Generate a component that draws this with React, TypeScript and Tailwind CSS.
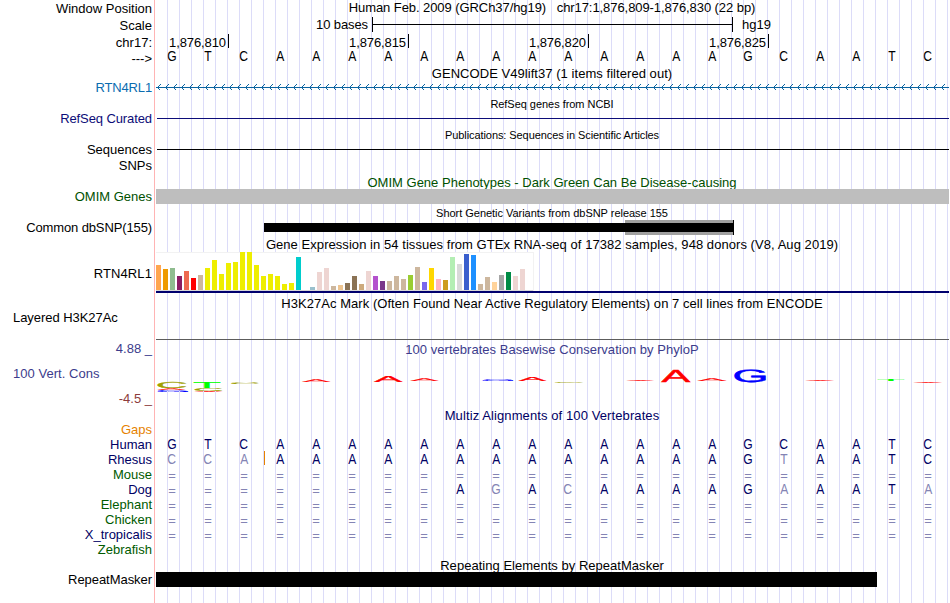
import type { ReactNode } from "react";

const GRID =
  "bg-[repeating-linear-gradient(90deg,transparent_0px,transparent_11px,#dcdcf8_11px,#dcdcf8_12px)]";

type RowProps = {
  h: string;
  label?: string;
  labelClass?: string;
  children?: ReactNode;
};

function Row({ h, label, labelClass = "", children }: RowProps) {
  return (
    <div className={`flex ${h}`}>
      <div className="w-[155px] shrink-0 border-r border-[#ffb4b4] pr-[2px] text-right">
        <div className={`whitespace-pre ${labelClass}`}>{label}</div>
      </div>
      <div className={`ml-px w-[793px] shrink-0 ${GRID}`}>{children}</div>
    </div>
  );
}

function Title({ className = "", children }: { className?: string; children: ReactNode }) {
  return <div className={`w-[792px] whitespace-pre text-center ${className}`}>{children}</div>;
}

function Bases({ seq, className = "", dim = [] }: { seq: string; className?: string; dim?: number[] }) {
  return (
    <div className={`flex h-[15px] w-[792px] ${className}`}>
      {seq.split("").map((c, i) => (
        <span key={i} className="flex w-[36px] justify-center pr-[4px]">
          <span
            className={`${c === "=" ? "mt-px" : "origin-[50%_12px] scale-x-[0.93] scale-y-[1.07]"} ${
              c === "=" || dim.includes(i) ? "text-[#8484b4]" : ""
            }`}
          >
            {c}
          </span>
        </span>
      ))}
    </div>
  );
}

const Y = "#eeee00";
const EXPRESSION: [number, string][] = [
  [25, "#ffa54f"], [21, "#ee9a00"], [22, "#8fbc8f"], [14, "#8b1c62"], [19, "#ee6a50"], [12, "#ff0000"], [15, "#cdb79e"],
  [22, Y], [30, Y], [16, Y], [27, Y], [28, Y], [38, Y], [38, Y], [25, Y], [14, Y], [16, Y], [14, Y], [6, Y], [7, Y],
  [33, "#00cdcd"], [0, "#ee82ee"], [3, "#9ac0cd"], [18, "#eed5d2"], [22, "#eed5d2"], [4, "#cdb79e"], [5, "#eec591"],
  [7, "#8b7355"], [14, "#8b7355"], [6, "#cdaa7d"], [19, "#eed5d2"], [14, "#b452cd"], [9, "#7a378b"], [9, "#cdb79e"],
  [14, "#cdb79e"], [11, "#cdb79e"], [15, "#9acd32"], [23, "#cdb79e"], [8, "#7a67ee"], [22, "#ffd700"], [11, "#ffb6c1"],
  [10, "#cd9b1d"], [33, "#b4eeb4"], [26, "#d9d9d9"], [36, "#3a5fcd"], [35, "#1e90ff"], [6, "#cdb79e"], [13, "#cdb79e"],
  [8, "#ffd39b"], [15, "#a6a6a6"], [18, "#008b45"], [14, "#eed5d2"], [21, "#eed5d2"], [0, "#ff00ff"],
];

// Ink box of each base letter at a font size of 1em: left, right, top, bottom.
const INK: Record<string, [number, number, number, number]> = {
  A: [0.004, 0.663, 0.688, 0],
  C: [0.05, 0.686, 0.698, 0.01],
  G: [0.05, 0.715, 0.698, 0.01],
  T: [0.021, 0.59, 0.688, 0],
};
const RED = "#ff0000";
const OLIVE = "#a0a000";
const BLUE = "#0000ff";
const GREEN = "#00ff00";

// letter, left, right, top, bottom, colour (page coordinates)
const LOGO: [string, number, number, number, number, string][] = [
  ["C", 158, 186, 382, 388.2, OLIVE],
  ["A", 158, 185, 388.2, 390, RED],
  ["G", 158, 188, 390, 392, BLUE],
  ["T", 194, 220, 382, 388, GREEN],
  ["C", 195, 222.3, 388, 391, OLIVE],
  ["A", 195, 222.3, 391, 392, RED],
  ["C", 231.7, 259, 382.2, 383.8, OLIVE],
  ["A", 302.5, 330, 379.2, 382, RED],
  ["A", 374.3, 402, 376, 382, RED],
  ["A", 410.7, 438, 378.2, 381, RED],
  ["G", 483, 513, 379, 380.8, BLUE],
  ["A", 519, 546, 377, 381, RED],
  ["C", 555, 583, 382, 383, OLIVE],
  ["A", 627, 654, 380, 381, RED],
  ["A", 661.7, 690, 370, 382, RED],
  ["A", 698, 726, 378.2, 381, RED],
  ["G", 734.7, 765.5, 369.2, 382, BLUE],
  ["A", 806, 834, 380, 381, RED],
  ["T", 878, 904, 379, 381, GREEN],
  ["A", 914, 942, 382, 383, RED],
];

function ConservationLogo() {
  return (
    <svg
      width="793"
      height="28"
      viewBox="156 366 793 28"
      className="block overflow-visible"
      textRendering="geometricPrecision"
    >
      {LOGO.map(([c, x0, x1, y0, y1, color], i) => {
        const [l, r, t, b] = INK[c];
        const sx = (x1 - x0) / ((r - l) * 20);
        const sy = (y1 - y0) / ((t + b) * 20);
        return (
          <text
            key={i}
            fontSize="20"
            fill={color}
            stroke={color}
            strokeWidth="0.5"
            transform={`translate(${x0 - l * 20 * sx} ${y1 - b * 20 * sy}) scale(${sx} ${sy})`}
          >
            {c}
          </text>
        );
      })}
    </svg>
  );
}

function StrandArrows() {
  const tips = Array.from({ length: 99 }, (_, i) => i * 8 + 1);
  return (
    <svg width="793" height="16" viewBox="0 0 793 16" className="block" fill="none" stroke="#0a64a0">
      <path d="M0 7.5H793" />
      <path
        d={tips.map((x) => `M${x + 3.5} 4.5L${x + 0.5} 7.5L${x + 3.5} 10.5`).join("")}
        shapeRendering="crispEdges"
      />
    </svg>
  );
}

function Positions() {
  return (
    <div className="flex tracking-[-0.1px]">
      <div className="flex h-[14px] w-[73px] justify-end border-r border-black pr-[2px]">
        <span className="mt-px">1,876,810</span>
      </div>
      {["1,876,815", "1,876,820", "1,876,825"].map((p) => (
        <div key={p} className="flex h-[14px] w-[180px] justify-end border-r border-black pr-[2px]">
          <span className="mt-px">{p}</span>
        </div>
      ))}
    </div>
  );
}

const HUMAN = "GTCAAAAAAAAAAAAAGCAATC";
const NONE = "======================";

export default function App() {
  return (
    <div className="h-[603px] w-[950px] overflow-hidden bg-white font-['Liberation_Sans',Arial,sans-serif] text-[13px] leading-[15px] text-black">
      <Row h="h-[17px]" label="Window Position" labelClass="mt-px">
        <Title className="tracking-[-0.07px]">
          {"Human Feb. 2009 (GRCh37/hg19)   chr17:1,876,809-1,876,830 (22 bp)"}
        </Title>
      </Row>
      <Row h="h-[17px]" label="Scale" labelClass="mt-px">
        <div className="flex">
          <span className="w-[212px] text-right tracking-[-0.1px]">10 bases</span>
          <div className="ml-[4px] flex h-[15px] w-[361px] items-center border-x border-black">
            <div className="h-px w-full bg-black" />
          </div>
          <span className="ml-[9px]">hg19</span>
        </div>
      </Row>
      <Row h="h-[15px]" label="chr17:" labelClass="mt-px">
        <Positions />
      </Row>
      <Row h="h-[17px]" label="--->" labelClass="mt-[2px]">
        <Bases seq={HUMAN} />
      </Row>
      <Row h="h-[14px]">
        <Title className="tracking-[0.05px]">GENCODE V49lift37 (1 items filtered out)</Title>
      </Row>
      <Row h="h-[16px]" label="RTN4RL1" labelClass="text-[#0a6cb0] tracking-[-0.15px]">
        <StrandArrows />
      </Row>
      <Row h="h-[15px]">
        <Title className="pt-[2px] text-[11px] leading-[12px] tracking-[-0.04px]">RefSeq genes from NCBI</Title>
      </Row>
      <Row h="h-[15px]" label="RefSeq Curated" labelClass="text-[#0c0c78] tracking-[-0.1px]">
        <div className="flex h-[8px] items-end pl-px">
          <div className="h-px w-full bg-[#0c0c78]" />
        </div>
      </Row>
      <Row h="h-[16px]">
        <Title className="pt-[3px] text-[11px] leading-[12px] tracking-[-0.08px]">
          Publications: Sequences in Scientific Articles
        </Title>
      </Row>
      <Row h="h-[16px]" label="Sequences">
        <div className="flex h-[8px] items-end pl-px">
          <div className="h-px w-full bg-black" />
        </div>
      </Row>
      <Row h="h-[17px]" label="SNPs" />
      <Row h="h-[14px]">
        <Title className="text-[#005000] tracking-[0.01px]">OMIM Gene Phenotypes - Dark Green Can Be Disease-causing</Title>
      </Row>
      <Row h="h-[15px]" label="OMIM Genes" labelClass="text-[#005000]">
        <div className="relative h-[15px] bg-[#bebebe]" />
      </Row>
      <Row h="h-[16px]">
        <Title className="pt-[3px] text-[11px] leading-[12px] tracking-[-0.03px]">
          Short Genetic Variants from dbSNP release 155
        </Title>
      </Row>
      <Row h="h-[15px]" label="Common dbSNP(155)" labelClass="tracking-[-0.12px]">
        <div className="flex h-[15px] items-center pl-[108px]">
          <div className="h-[9px] w-[361px] bg-black" />
          <div className="flex h-[15px] w-[109px] items-center border-r border-black bg-[#a0a0a0]">
            <div className="h-[9px] w-full bg-black" />
          </div>
        </div>
      </Row>
      <Row h="h-[17px]">
        <Title className="pt-[2px] tracking-[0.055px]">
          Gene Expression in 54 tissues from GTEx RNA-seq of 17382 samples, 948 donors (V8, Aug 2019)
        </Title>
      </Row>
      <Row h="h-[41px]" label="RTN4RL1" labelClass="mt-[14px] tracking-[0.1px]">
        <div className="flex h-[39px] w-[378px] items-end gap-[2px] bg-white pb-px shadow-[inset_-1px_1px_0_#f2f2f2,inset_0_-1px_0_#d8d8d8]">
          {EXPRESSION.map(([h, c], i) => (
            <div key={i} className="w-[5px] shrink-0" style={{ height: h, backgroundColor: c }} />
          ))}
        </div>
        <div className="h-[2px] bg-[#00006e]" />
      </Row>
      <Row h="h-[17px]">
        <Title className="pt-[3px] tracking-[0.045px]">
          H3K27Ac Mark (Often Found Near Active Regulatory Elements) on 7 cell lines from ENCODE
        </Title>
      </Row>
      <Row h="h-[31px]" label="Layered H3K27Ac" labelClass="pl-[13px] text-left tracking-[-0.05px]">
        <div className="h-[30px] border-b border-[#5c5c5c]" />
      </Row>
      <Row h="h-[25px]" label="4.88 _" labelClass="text-[#3c3c8c]">
        <Title className="pt-px text-[#3c3c8c] tracking-[0.03px]">100 vertebrates Basewise Conservation by PhyloP</Title>
      </Row>
      <Row h="h-[25px]" label="100 Vert. Cons" labelClass="pl-[13px] text-left text-[#3c3c8c] tracking-[0.04px]">
        <ConservationLogo />
      </Row>
      <Row h="h-[17px]" label="-4.5 _" labelClass="text-[#8c3c3c]" />
      <Row h="h-[14px]">
        <Title className="text-[#000064] tracking-[0.1px]">Multiz Alignments of 100 Vertebrates</Title>
      </Row>
      <Row h="h-[15px]" label="Gaps" labelClass="text-[#e68200]" />
      <Row h="h-[15px]" label="Human" labelClass="text-[#000064]">
        <Bases seq={HUMAN} className="text-[#000064]" />
      </Row>
      <Row h="h-[15px]" label="Rhesus" labelClass="text-[#000064]">
        <div className="relative">
          <Bases seq="CCAAAAAAAAAAAAAAGTAATC" dim={[0, 1, 2, 17]} className="text-[#000064]" />
          <div className="absolute left-[108px] top-[-1px] h-[14px] w-px bg-[#e68200]" />
        </div>
      </Row>
      <Row h="h-[15px]" label="Mouse" labelClass="text-[#005a00]">
        <Bases seq={NONE} />
      </Row>
      <Row h="h-[15px]" label="Dog" labelClass="text-[#000064]">
        <Bases seq="========AGACAAAAGAAATA" dim={[9, 11, 17, 21]} className="text-[#000064]" />
      </Row>
      <Row h="h-[15px]" label="Elephant" labelClass="text-[#005a00]">
        <Bases seq={NONE} />
      </Row>
      <Row h="h-[15px]" label="Chicken" labelClass="text-[#005a00]">
        <Bases seq={NONE} />
      </Row>
      <Row h="h-[15px]" label="X_tropicalis" labelClass="text-[#000064]">
        <Bases seq={NONE} />
      </Row>
      <Row h="h-[15px]" label="Zebrafish" labelClass="text-[#005a00]" />
      <Row h="h-[15px]">
        <Title className="pt-px tracking-[0.03px]">Repeating Elements by RepeatMasker</Title>
      </Row>
      <Row h="h-[15px]" label="RepeatMasker" labelClass="tracking-[-0.05px]">
        <div className="relative h-[15px] w-[721px] bg-black" />
      </Row>
      <Row h="h-[16px]" />
    </div>
  );
}
